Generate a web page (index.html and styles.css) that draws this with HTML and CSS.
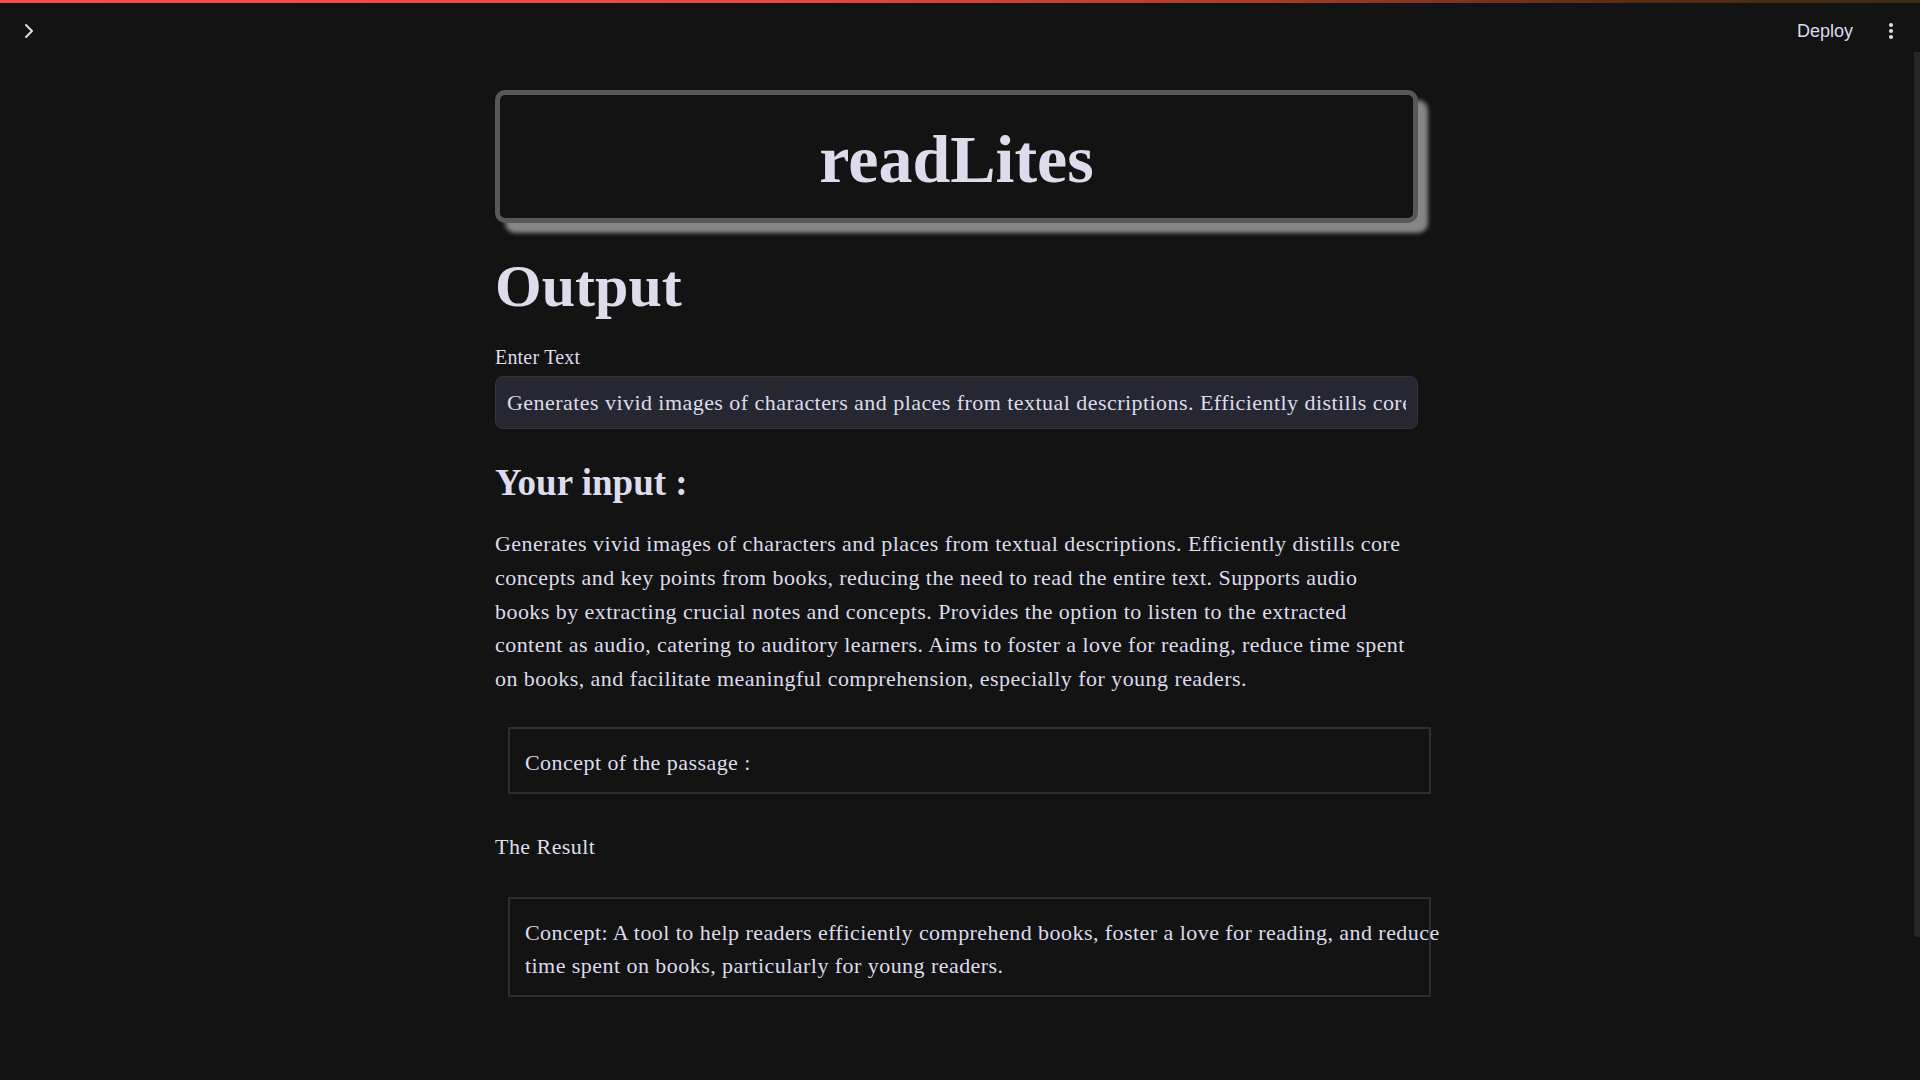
FILE: index.html
```html
<!DOCTYPE html>
<html lang="en">
<head>
<meta charset="utf-8">
<title>readLites</title>
<link rel="stylesheet" href="styles.css">
</head>
<body>
<div class="app">
  <div class="decoration"></div>
  <header class="toolbar">
    <button class="sidebar-toggle" aria-label="Open sidebar">
      <svg width="18" height="18" viewBox="0 0 18 18"><path d="M6 3 L12 9 L6 15" fill="none" stroke="#dcdcec" stroke-width="2" stroke-linecap="round" stroke-linejoin="round"/></svg>
    </button>
    <div class="toolbar-actions">
      <span class="deploy">Deploy</span>
      <span class="kebab">
        <svg width="6" height="20" viewBox="0 0 6 20"><circle cx="3" cy="4" r="2.1" fill="#dcdcec"/><circle cx="3" cy="10" r="2.1" fill="#dcdcec"/><circle cx="3" cy="16" r="2.1" fill="#dcdcec"/></svg>
      </span>
    </div>
  </header>
  <main class="main">
    <div class="block">
      <div class="title-card"><h1 class="title">readLites</h1></div>
      <h1 class="page-title">Output</h1>
      <label class="input-label" for="text-in">Enter Text</label>
      <input id="text-in" class="text-input" type="text" readonly value="Generates vivid images of characters and places from textual descriptions. Efficiently distills core concepts and key points from books, reducing the need to read the entire text. Supports audio books by extracting crucial notes and concepts. Provides the option to listen to the extracted content as audio, catering to auditory learners. Aims to foster a love for reading, reduce time spent on books, and facilitate meaningful comprehension, especially for young readers.">
      <h3 class="section-title">Your input :</h3>
      <p class="body-text">Generates vivid images of characters and places from textual descriptions. Efficiently distills core concepts and key points from books, reducing the need to read the entire text. Supports audio books by extracting crucial notes and concepts. Provides the option to listen to the extracted content as audio, catering to auditory learners. Aims to foster a love for reading, reduce time spent on books, and facilitate meaningful comprehension, especially for young readers.</p>
      <div class="result-box first"><p class="box-text">Concept of the passage :</p></div>
      <p class="body-text result-label">The Result</p>
      <div class="result-box second"><p class="box-text">Concept: A tool to help readers efficiently comprehend books, foster a love for reading, and reduce time spent on books, particularly for young readers.</p></div>
    </div>
  </main>
  <div class="scrollbar"></div>
</div>
</body>
</html>
```
FILE: styles.css
```css
html, body {
  margin: 0;
  padding: 0;
  background: #131313;
  height: 100%;
  overflow: hidden;
}

.app {
  position: relative;
  height: 1080px;
  color: #dcdcec;
  font-family: "Liberation Serif", "Times New Roman", serif;
}

.decoration {
  height: 3px;
  background: linear-gradient(90deg, #ff4b4b 0%, #f04545 40%, #b03a2a 65%, #5a2c14 85%, #3a2c0c 100%);
}

.toolbar {
  height: 56px;
  display: flex;
  align-items: center;
  justify-content: space-between;
  padding: 0 26px 0 20px;
}

.sidebar-toggle {
  background: none;
  border: 0;
  padding: 0;
  width: 18px;
  height: 18px;
  display: flex;
}

.toolbar-actions {
  display: flex;
  align-items: center;
  gap: 35px;
}

.deploy {
  font-family: "Liberation Sans", Arial, sans-serif;
  font-size: 18px;
  color: #dcdcec;
}

.kebab {
  display: flex;
  width: 6px;
  height: 20px;
}

.main {
  display: flex;
  justify-content: center;
  padding-right: 7px;
}

.block {
  width: 923px;
  padding-top: 31px;
}

.title-card {
  box-sizing: border-box;
  height: 133px;
  border: 5px solid #585858;
  border-radius: 10px;
  box-shadow: 10px 10px 4px #868686;
  display: flex;
  align-items: center;
  justify-content: center;
  background: #131313;
}

.title {
  margin: 0;
  font-size: 68px;
  font-weight: 700;
  line-height: 1;
  padding-top: 4px;
}

.page-title {
  margin: 28px 0 0;
  font-size: 60px;
  font-weight: 700;
  line-height: 70px;
}

.input-label {
  display: block;
  margin-top: 24px;
  font-size: 20px;
  letter-spacing: 0.2px;
  line-height: 24px;
}

.text-input {
  display: block;
  box-sizing: border-box;
  width: 100%;
  height: 53px;
  margin: 7px 0 0;
  padding: 1px 11px 0;
  background: #262730;
  border: 1px solid #33343e;
  border-radius: 8px;
  color: #dcdcec;
  font-family: "Liberation Serif", "Times New Roman", serif;
  font-size: 22px;
  letter-spacing: 0.45px;
  outline: none;
}

.section-title {
  margin: 31px 0 0;
  font-size: 37px;
  font-weight: 700;
  line-height: 46px;
}

.body-text {
  margin: 21px 0 0;
  font-size: 22px;
  letter-spacing: 0.45px;
  line-height: 33.8px;
}

.result-box {
  box-sizing: border-box;
  width: 923px;
  margin-left: 13px;
  border: 2px solid #2e2e2e;
  padding: 17px 15px 12px;
}

.result-box.first {
  margin-top: 31px;
}

.result-box.second {
  margin-top: 33px;
}

.box-text {
  margin: 0;
  width: 923px;
  font-size: 22px;
  letter-spacing: 0.45px;
  line-height: 33.8px;
}

.result-label {
  margin-top: 36px;
}

.scrollbar {
  position: absolute;
  right: 0;
  top: 52px;
  width: 6px;
  height: 885px;
  background: #26262b;
  border-bottom-left-radius: 4px;
}
```
